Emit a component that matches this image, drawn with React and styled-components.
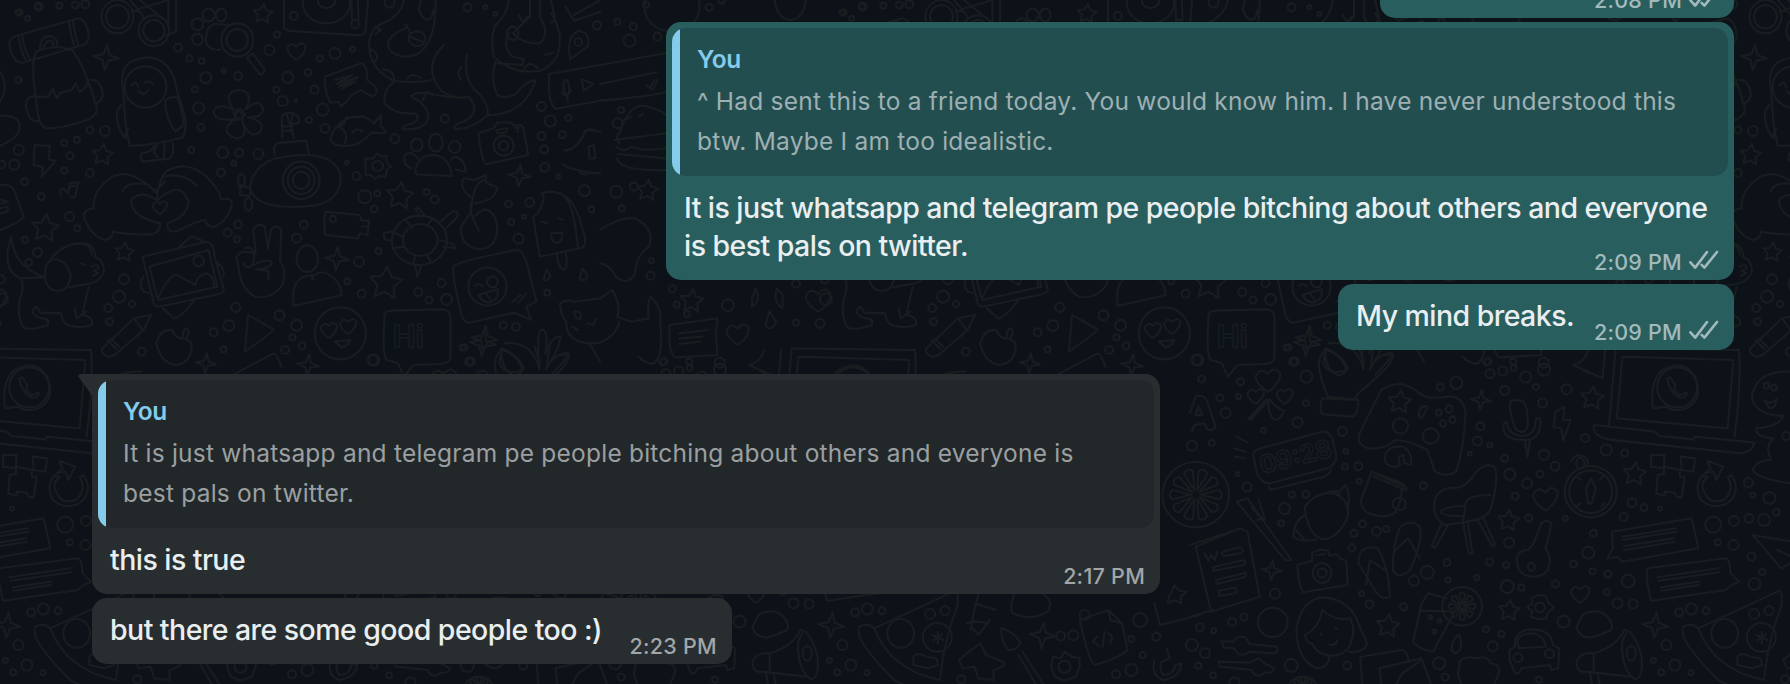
import React from "react";
import styled, { createGlobalStyle, css } from "styled-components";

const Global = createGlobalStyle`
  html, body { margin: 0; padding: 0; background: #0d1219; }
  * { box-sizing: border-box; }
`;

const Screen = styled.main`
  position: relative;
  width: 1790px;
  height: 684px;
  overflow: hidden;
  background: #0d1219;
  font-family: Inter, "Liberation Sans", sans-serif;
`;

const Wallpaper = styled.svg`
  position: absolute;
  inset: 0;
  width: 100%;
  height: 100%;
  fill: none;
  stroke: #181d20;
  stroke-width: 2.1;
  stroke-linecap: round;
  stroke-linejoin: round;
  text {
    font-family: Inter, sans-serif;
    font-weight: 700;
    stroke-width: 1.4;
  }
`;

const Thread = styled.div`
  position: relative;
  display: flex;
  flex-direction: column;
  justify-content: flex-end;
  gap: 24px;
  height: 100%;
  padding: 0 56px 20px 92px;
`;

const Group = styled.section`
  display: flex;
  flex-direction: column;
  align-items: ${(p) => (p.$out ? "flex-end" : "flex-start")};
  gap: 4px;
`;

const Bubble = styled.article`
  position: relative;
  display: flex;
  flex-direction: column;
  flex: none;
  width: ${(p) => p.$width}px;
  min-height: 66px;
  border-radius: ${(p) => (p.$tail ? "0 15px 15px 15px" : "15px")};
  color: #e9eef0;
  background: ${(p) => (p.$out ? "#295e5f" : "#282e30")};
  ${(p) =>
    p.$tail &&
    css`
      &::before {
        content: "";
        position: absolute;
        top: 0;
        left: -14px;
        width: 15px;
        height: 23px;
        background: inherit;
        clip-path: polygon(0 2px, 2px 0, 100% 0, 100% 100%);
      }
    `}
`;

const Quote = styled.blockquote`
  display: flex;
  gap: 17px;
  height: 148px;
  margin: 6px 6px 0;
  overflow: hidden;
  border-radius: 14px;
  background: ${(p) => (p.$out ? "#234e4f" : "#22282a")};
  color: ${(p) => (p.$out ? "#9db0b3" : "#9b9fa1")};
  &::before {
    content: "";
    width: 8px;
    background: #84cbec;
  }
`;

const QuoteContent = styled.div`
  padding-top: 11px;
`;

const Author = styled.div`
  height: 42px;
  font-size: 24.5px;
  line-height: 40px;
  font-weight: 600;
  letter-spacing: -0.4px;
  color: #84cbec;
`;

const QuoteText = styled.div`
  font-size: 24.5px;
  line-height: 40px;
  letter-spacing: 0.22px;
  white-space: pre;
`;

const Body = styled.div`
  display: grid;
  flex: 1;
  padding: 0 15px 0 18px;
`;

const Message = styled.div`
  grid-area: 1 / 1;
  display: flex;
  flex-direction: column;
  align-items: flex-start;
  padding-top: 13px;
  font-size: 28.5px;
  line-height: 38px;
  font-weight: 500;
  letter-spacing: -0.55px;
`;

const Line = styled.span`
  white-space: pre;
`;

const Meta = styled.div`
  grid-area: 1 / 1;
  align-self: end;
  justify-self: end;
  display: flex;
  align-items: center;
  gap: 7px;
  height: 30px;
  margin-bottom: 3px;
  font-size: 21.5px;
  line-height: 30px;
  font-weight: 500;
  letter-spacing: 0.25px;
  color: ${(p) => (p.$out ? "#a3babd" : "#a2a6a8")};
`;

const Ticks = styled.svg`
  width: 30px;
  height: 20px;
  margin-top: -5px;
  fill: none;
  stroke: currentColor;
  stroke-width: 2.6;
  stroke-linecap: round;
  stroke-linejoin: round;
`;

/* Doodles are plotted on sheets whose units are 2.613 (x) and 3 (y) per pixel. */
const SX = 2.613;
const SY = 3;

const radial = (x, y, r, inner, points) => {
  let d = "";
  for (let i = 0; i < points * 2; i++) {
    const a = (Math.PI * i) / points - Math.PI / 2 + 0.1;
    const q = i % 2 ? r * inner : r;
    d += `${i ? "L" : "M"}${(x + Math.cos(a) * q * SX).toFixed(1)} ${(y + Math.sin(a) * q * SY).toFixed(1)}`;
  }
  return d + "Z";
};

const heart = (x, y, r) => {
  const a = r * SX;
  const b = r * SY;
  return `M${x} ${y - b * 0.5}Q${x + a * 0.5} ${y - b * 1.2} ${x + a} ${y - b * 0.6}Q${x + a * 1.1} ${y + b * 0.2} ${x} ${y + b}Q${x - a * 1.2} ${y + b * 0.2} ${x - a} ${y - b * 0.4}Q${x - a * 0.6} ${y - b * 1.1} ${x} ${y - b * 0.5}Z`;
};

/* Wedges of a sliced fruit, arranged round a centre. */
const citrus = (x, y, r, count) => {
  let d = "";
  const at = (a, q) => `${(x + Math.cos(a) * q * SX).toFixed(1)} ${(y + Math.sin(a) * q * SY).toFixed(1)}`;
  for (let i = 0; i < count; i++) {
    const a = (2 * Math.PI * i) / count;
    const half = (Math.PI / count) * 0.62;
    d += `M${at(a, r * 0.16)}L${at(a - half, r * 0.88)}Q${at(a, r * 1.08)} ${at(a + half, r * 0.88)}Z`;
  }
  return d;
};

const UPPER = {
  x: 0,
  y: 0,
  dots: [
    [99, 20, 3], [155, 17, 3], [223, 13, 4], [47, 37, 2.5], [72, 55, 2.5], [465, 143, 4], [495, 175, 3], [527, 183, 3], [48, 240, 3],
    [538, 233, 5.5], [585, 212, 2], [622, 228, 4], [509, 268, 3], [519, 324, 5.5], [525, 382, 3.5], [274, 393, 5], [235, 390, 3.5], [201, 419, 3],
    [168, 429, 3], [183, 467, 3.5], [49, 450, 5], [37, 494, 5], [3, 494, 4], [168, 512, 3], [235, 519, 4], [64, 545, 3.5], [108, 590, 3.5],
    [182, 650, 4.5], [202, 685, 3], [65, 719, 3], [98, 757, 4.5], [75, 787, 3.5], [324, 838, 5], [311, 890, 6], [345, 912, 3], [283, 924, 4],
    [286, 965, 3.5], [5, 898, 6], [2, 838, 4], [371, 1055, 4], [500, 450, 3], [582, 458, 5.5], [625, 458, 4], [611, 490, 2.5], [675, 462, 5],
    [577, 518, 4], [704, 150, 5], [724, 104, 3], [768, 48, 4], [752, 232, 5.5], [805, 217, 3.5], [722, 269, 3], [822, 269, 4], [739, 303, 5],
    [774, 302, 1], [843, 329, 6], [807, 360, 3], [849, 385, 4.5], [875, 160, 5.5], [921, 148, 2.5], [836, 176, 3], [906, 488, 2], [931, 528, 4],
    [953, 590, 6.5], [986, 580, 3], [978, 627, 3.5], [1032, 416, 4.5], [1115, 576, 3], [1136, 598, 4], [794, 674, 4], [775, 714, 4.5], [622, 673, 4],
    [595, 698, 4], [619, 718, 3], [938, 785, 5], [989, 753, 3], [908, 844, 3], [945, 881, 4], [616, 922, 4.5], [730, 946, 5], [775, 976, 5.5],
    [598, 977, 5.5], [558, 997, 4], [764, 1012, 3], [745, 1050, 4], [789, 1038, 3.5], [584, 1048, 3], [974, 1080, 5], [1093, 876, 4], [1121, 900, 3.5],
    [1154, 849, 4], [1167, 898, 5.5], [1162, 356, 4], [1415, 319, 4.5], [1438, 363, 5.5], [1485, 354, 3], [1415, 408, 4], [1470, 404, 3.5], [1422, 448, 4],
    [1423, 502, 4.5], [1459, 530, 2], [1527, 572, 5.5], [1329, 612, 3.5], [1384, 607, 4.5], [1336, 666, 3], [1370, 650, 2], [1355, 716, 5],
    [1430, 878, 3], [1315, 976, 3.5], [1348, 981, 4], [1209, 1043, 3], [1226, 1085, 4], [1222, 22, 4], [1268, 22, 2], [1295, 42, 2], [1018, 8, 5],
    [1545, 628, 3], [1560, 76, 4],
    [1613, 65, 3], [1655, 80, 3.5], [1645, 122, 6], [1718, 110, 4], [1623, 330, 3], [1614, 370, 5], [1656, 560, 4], [1610, 575, 6], [1625, 625, 3],
    [1702, 782, 2.5], [1700, 827, 4], [1757, 867, 3.5], [1768, 914, 3], [1795, 942, 3], [1902, 916, 6], [2080, 851, 4], [2080, 968, 3], [2143, 970, 4.5],
    [1732, 1085, 3.5], [1801, 1085, 3], [1880, 1088, 5], [1688, 14, 3], [1853, 22, 3.5], [1885, 2, 3], [2204, 38, 3], [2254, 20, 4], [2350, 15, 3.5],
  ],
  stars: [[687, 42, 10], [268, 465, 11], [118, 685, 14], [325, 757, 10], [1045, 588, 14], [1008, 850, 17], [1692, 572, 11], [1808, 903, 12]],
  sparkles: [[277, 172, 13], [1357, 527, 11], [880, 776, 12], [1266, 1016, 13], [538, 1090, 10], [805, 1095, 11]],
  hearts: [[775, 153, 9], [418, 622, 7], [860, 990, 8], [910, 978, 8], [2138, 900, 12], [1928, 1002, 11]],
  rings: [
    [380, 261, 55, 62], [307, 50, 42, 50], [307, 50, 30, 35], [402, 92, 40, 46], [402, 92, 28, 32], [620, 120, 42, 50], [620, 120, 28, 33],
    [545, 45, 16, 19], [578, 45, 14, 19], [516, 73, 15, 18], [516, 118, 14, 17], [853, 10, 62, 60], [853, 5, 22, 19], [928, 72, 10, 13],
    [787, 541, 48, 56], [787, 541, 35, 41], [787, 541, 22, 26], [1096, 721, 72, 74], [1098, 720, 45, 48], [803, 776, 28, 40], [889, 1000, 67, 78],
    [1274, 860, 50, 57], [1287, 846, 14, 16], [1316, 437, 26, 30], [1316, 437, 12, 14], [1139, 428, 18, 27], [1089, 435, 15, 19], [1188, 441, 15, 18],
    [987, 498, 14, 15], [1511, 126, 10, 12], [519, 783, 14, 16], [1340, 100, 15, 20], [1090, 116, 22, 22], [870, 657, 8, 10], [625, 343, 12, 16],
    [2065, 0, 40, 60], [631, 542, 9, 20], [649, 613, 10, 19], [1756, 20, 72, 75],
  ],
  paths: [
    "M40 108L205 55Q228 60 232 110Q230 132 215 136L60 188Q35 190 25 140Q22 115 40 108ZM48 107Q52 150 70 185M58 104Q62 150 80 182M180 65Q185 105 195 142M190 62Q195 100 205 138M105 145Q105 108 130 108Q152 112 150 140M115 141Q120 118 135 122Q142 130 138 139",
    "M95 155Q150 130 190 152Q215 190 230 245Q245 290 253 325Q255 350 215 365Q160 385 120 385Q100 375 97 320Q85 250 87 180ZM95 290Q115 292 128 288L138 265L148 295L158 278L188 270L198 250L208 275Q225 265 230 245M230 240Q260 235 268 275Q272 300 252 310M92 288Q65 290 68 320Q75 370 100 362",
    "M322 270Q305 178 385 172Q450 175 462 270L484 350Q488 385 478 412Q410 435 340 438Q328 400 325 320ZM345 255Q355 240 362 262M378 248Q390 240 400 252M362 272Q375 292 387 270M432 300Q450 285 465 295Q478 340 480 375L458 395Q430 350 432 300M318 315Q300 330 307 365Q312 395 325 412M335 385L325 412L338 415M370 460Q400 455 402 438M370 460Q362 480 375 485L440 476Q455 475 452 430M410 435Q395 460 412 470M430 430L428 472",
    "M340 0L360 28L440 0M365 0L425 55M440 0L440 68M460 0L460 95L430 108M345 35Q370 25 375 55",
    "M600 75L560 72Q538 80 538 120Q540 150 575 150M645 172L660 160L692 208Q690 225 678 222ZM742 0L742 80Q745 92 760 93L940 106Q955 105 955 90L962 0M918 0L920 60M935 0L937 60",
    "M610 330Q580 275 625 270Q665 275 642 328Q680 290 688 330Q680 355 648 352Q695 365 680 395Q655 420 634 368Q650 415 615 415Q570 395 612 358Q560 365 558 335Q568 305 610 330M625 328L631 340L641 343L632 350L634 362L625 355L615 361L617 348L610 340L620 339Z",
    "M737 412L737 350Q745 335 765 340Q785 350 780 370L758 372L768 415M750 340L755 370M765 340L760 370M737 380L766 378M737 393L766 391M718 465Q710 430 735 428L800 422L808 465M653 562Q660 500 720 475Q870 440 890 525Q895 600 820 617Q665 635 653 562ZM628 555L655 565L652 588L627 585Z",
    "M848 230L945 190Q958 190 960 240L975 255Q990 265 980 285Q970 295 945 270Q920 280 910 298L892 320L885 305L865 308Q850 290 848 230ZM875 240L920 225L880 252L935 232L885 260L930 245L895 265",
    "M863 420Q870 375 915 352L950 350Q970 360 978 370L995 345L995 378Q1015 395 1003 400L970 398Q935 445 895 437Q870 437 863 420ZM905 350L900 370L885 380Q915 400 900 430M920 400Q930 380 948 395",
    "M1055 0Q1050 45 1000 70Q960 90 965 145Q970 210 1030 243Q1085 250 1130 240M1138 0Q1140 115 1100 155Q1060 185 1022 155Q1000 125 1040 95Q1075 80 1060 75M1160 135Q1100 200 1155 275Q1200 300 1225 290Q1260 340 1210 365Q1180 375 1190 387Q1230 390 1275 345Q1370 345 1400 240Q1370 245 1350 280Q1320 300 1300 285Q1280 240 1295 185M1220 165Q1210 230 1240 270Q1275 300 1275 340M1100 0Q1085 40 1115 60Q1132 55 1132 30M980 80L995 90L980 103M970 148Q995 165 980 185M1000 208Q1030 210 1030 238M1065 235Q1075 215 1100 235",
    "M1030 245Q1000 270 1005 310Q1030 345 1085 340Q1100 355 1080 370Q1040 380 1055 388Q1115 390 1120 350Q1115 310 1075 290Q1080 275 1120 280Q1200 300 1225 290M1060 75Q1075 90 1070 110L1105 125M1105 300L1115 275L1130 285M1205 200Q1190 220 1205 240",
    "M1330 0Q1325 45 1295 75Q1280 110 1290 170Q1340 225 1410 212Q1470 190 1462 100Q1450 60 1440 0M1385 0L1385 50L1340 100Q1370 135 1410 130Q1440 100 1410 50L1412 0M1330 100Q1310 140 1340 170L1368 178L1365 195L1300 190M1355 45L1365 65L1380 50M1440 40L1450 60L1440 68M1425 165L1445 158M1370 205Q1385 180 1405 205",
    "M1085 510Q1095 462 1135 465Q1175 470 1180 528L1088 523ZM1075 505Q1050 495 1058 465Q1075 450 1092 475M1190 508L1217 515Q1215 475 1188 470L1178 480",
    "M1250 400L1290 385L1300 368L1335 368L1345 378Q1360 368 1368 385L1380 465L1270 493Q1258 480 1250 400ZM1297 390L1325 385L1322 398L1300 400ZM1345 385L1355 382L1352 396",
    "M1490 178Q1478 110 1512 92Q1545 100 1535 140ZM1478 20L1500 62L1568 35M1500 45L1568 0M1568 195L1435 222Q1430 300 1450 327L1568 302M1475 240Q1485 235 1487 260Q1490 285 1478 285Q1468 260 1475 240M1468 275Q1480 300 1492 270M1482 290L1484 305M1520 238L1550 252L1525 272ZM1568 195L1745 158Q1760 190 1745 240L1750 270Q1740 285 1568 302M1568 252L1715 217M1690 255L1698 265L1710 240M1700 265L1706 268L1718 240",
    "M955 500L955 475L975 475L985 460L998 470L1010 468L1010 485L1022 500L1010 510L1008 530L990 528L980 537L968 525L955 525Z",
    "M90 435L130 438L128 478L145 482L110 530L112 500L88 495ZM160 585Q150 570 165 565L178 580L182 550L205 547L198 580Q200 595 185 590M182 560L203 557",
    "M410 580Q340 500 295 530Q240 570 245 625Q215 630 220 655Q240 710 275 720Q295 715 295 695Q350 705 390 703Q420 700 418 670Q340 650 343 600Q355 580 385 585L410 600Q415 530 440 510Q490 480 540 530Q580 580 577 598Q610 590 605 620Q590 670 555 682Q540 675 535 660Q510 665 470 690Q435 705 438 670Q490 650 493 605Q480 565 455 570Q425 580 410 605M320 575Q330 540 390 555M428 530Q480 515 515 558M405 575L430 545",
    "M0 555Q35 550 40 580L62 650Q55 665 0 690M0 598L20 605L0 612M0 625L20 620Q25 640 0 640M0 347Q60 345 50 390Q45 415 0 438M0 215Q25 260 0 305",
    "M30 708Q0 810 55 835L115 832M30 720Q40 800 115 832M118 815Q120 775 150 778Q180 790 185 830Q175 880 145 872Q115 865 118 815M130 780Q170 720 230 732Q250 745 248 770Q270 780 272 810Q270 835 240 850L180 862M205 732Q235 725 240 765M55 835Q65 860 50 905Q45 965 65 985Q90 990 125 975Q130 955 110 955Q85 950 85 930L95 920L105 938L160 940Q160 970 185 978Q215 985 240 975Q245 950 215 945Q225 890 232 862M195 925L200 955L225 935M210 790L222 795M240 800Q255 788 258 805L245 812L258 820L243 828",
    "M372 770L540 725Q560 730 560 765L585 870Q585 880 560 885L415 920Q400 920 400 900ZM390 800L545 750L568 860L413 900ZM415 890Q440 830 460 823L510 855Q515 825 540 820Q560 830 560 862M460 750L500 708L540 728M425 925L455 955Q470 955 505 905M375 830Q360 850 375 875L392 880M570 790Q590 810 583 830",
    "M622 790Q610 760 640 755L668 760L662 690Q670 665 692 680L700 745L708 690Q720 670 735 690L732 785Q750 810 738 855Q710 900 665 890Q625 860 622 790ZM640 745Q660 735 665 770L660 795Q645 810 635 790M665 795Q690 775 710 785Q712 805 670 808L700 812L702 838",
    "M850 635L940 645L945 662L965 662L960 705L940 700L935 715L850 705Q845 670 850 635ZM945 680L960 680",
    "M815 835Q820 815 850 818Q890 840 893 885L768 918Q755 830 815 825L818 838Z",
    "M1098 650L1085 625L1095 625L1110 648M1150 665L1185 632Q1205 640 1190 658L1160 690M1025 720Q1000 725 1003 700Q1025 690 1032 700M1085 795L1090 830L1100 800M1160 740L1190 745Q1185 725 1165 728M1060 660L1078 685M1130 655L1115 680M1030 700L1055 710M1025 745L1055 740M1080 790L1085 765M1125 785L1115 762M1165 725L1145 720",
    "M1230 640L1235 595Q1200 570 1210 535L1240 540L1270 525L1270 550L1298 560Q1300 600 1240 610M1235 595Q1240 550 1265 540M1230 610Q1225 640 1252 692M1228 640L1205 680Q1200 740 1255 748Q1305 740 1298 670Q1290 630 1265 628Q1245 640 1240 650",
    "M1405 640Q1430 590 1415 580Q1440 570 1460 580Q1500 590 1520 680Q1540 740 1515 745L1410 770Q1400 700 1393 650ZM1465 580Q1500 600 1510 745M1415 665L1430 670M1460 655L1470 660M1440 700L1470 698Q1470 725 1455 730Q1440 725 1440 700M1455 765Q1460 810 1475 808Q1485 800 1478 760",
    "M1185 800Q1190 785 1350 750Q1370 745 1385 830L1402 905L1375 920L1388 960L1345 938L1225 968Q1210 965 1205 940Q1180 820 1185 800M1240 858Q1250 845 1262 860M1250 885L1300 868Q1305 900 1278 908Q1260 905 1250 885M1270 880L1285 905M1340 905L1360 885M1355 907L1375 880",
    "M1475 452Q1510 450 1530 390L1568 395M1470 493Q1500 515 1568 520M1538 440L1540 475L1555 475L1552 435ZM1515 515Q1520 530 1540 520M1530 395Q1540 380 1560 395",
    "M1420 840L1428 808L1438 825Q1435 845 1420 840M1515 835L1522 805L1535 825Q1530 850 1515 835",
    "M268 1045L350 955L395 945L375 990L300 1065Q275 1080 265 1050ZM350 955L372 990M280 1020L305 1048M288 1015L312 1040",
    "M450 990Q420 985 408 1030Q420 1090 460 1095Q505 1085 500 1030L485 1015Q460 1020 450 990M478 1010Q475 990 490 985Q498 1000 485 1015",
    "M648 945L715 988Q715 995 640 1055ZM875 1025L915 1020Q905 1045 890 1040ZM600 1130L715 1060Q725 1065 735 1100",
    "M1005 945Q1005 935 1020 932L1155 928Q1175 930 1177 950L1177 1075Q1175 1090 1150 1092L1080 1095L1055 1130L1040 1090L1010 1080Q998 1060 1005 945Z",
    "M1465 910Q1480 895 1500 905L1568 895M1463 910Q1465 950 1480 965Q1478 1025 1540 1030L1568 1028M1500 935Q1520 930 1518 955Q1505 965 1500 935M1535 970L1550 975L1558 955M1495 980L1510 990M1540 1030L1568 1085M1568 895L1600 870Q1625 920 1612 950L1650 965L1695 955Q1690 905 1700 890Q1730 920 1725 970Q1735 1060 1710 1090Q1690 1095 1670 1070M1565 1028Q1610 1010 1618 965",
    "M1318 1030Q1390 1020 1410 1110Q1400 1000 1415 988Q1435 990 1425 1060Q1440 1010 1465 1010Q1460 1050 1435 1090Q1470 1050 1485 1060Q1480 1080 1440 1125M1310 1045Q1350 1060 1365 1110Q1320 1130 1305 1090Z",
    "M1618 430Q1605 415 1620 395Q1645 310 1685 318Q1720 325 1740 345M1605 420L1740 400M1610 440Q1630 460 1650 440Q1680 455 1740 445M1615 462L1740 475M1612 475Q1620 515 1740 510M1630 360L1650 350M1670 350L1680 340",
    "M1568 690Q1620 650 1660 655Q1715 690 1695 740Q1660 770 1660 820Q1640 860 1610 830Q1590 790 1568 790",
    "M1750 975L1875 955L1870 1000L1875 1065L1765 1072Q1745 1060 1750 975ZM1775 1000L1850 990M1775 1015L1835 1010M1775 1032L1830 1025",
    "M1965 895L1975 865Q1990 905 1965 920ZM2045 885L2030 865Q2020 910 2045 925ZM2010 935L2000 975Q2015 1000 2028 965Z",
  ],
};

const LOWER = {
  x: 366,
  y: 340,
  dots: [
    [20, 60, 5.5], [30, 117, 3.5], [132, 125, 3.5], [78, 174, 3.5], [127, 170, 2.5], [93, 219, 5], [281, 247, 5], [192, 271, 2.5], [5, 317, 5], [57, 309, 3],
    [124, 402, 2], [149, 441, 4.5], [304, 110, 6], [303, 190, 3], [274, 65, 4], [257, 22, 3], [398, 274, 4.5], [407, 334, 2.5], [405, 380, 3], [440, 379, 4],
    [442, 424, 2.5], [247, 506, 5.5], [266, 464, 3], [303, 463, 3.5], [238, 550, 3], [423, 623, 3.5], [451, 552, 3.5], [428, 580, 3.5], [487, 574, 4.5],
    [513, 567, 3], [610, 437, 3.5], [654, 142, 3.5], [696, 129, 6], [778, 65, 3.5], [784, 101, 4.5], [817, 93, 4.5], [846, 84, 3], [877, 111, 5.5],
    [925, 89, 6], [904, 141, 3], [822, 151, 4.5], [921, 189, 4.5], [984, 148, 5], [759, 259, 4], [751, 303, 4.5], [783, 315, 2.5], [731, 341, 2],
    [822, 355, 3.5], [925, 345, 5], [836, 403, 5.5], [915, 402, 3.5], [954, 379, 4.5], [881, 430, 5], [850, 469, 3.5], [885, 534, 3.5], [981, 535, 2.5],
    [1032, 294, 4], [1088, 330, 5.5], [1136, 339, 3.5], [1155, 488, 4.5], [1186, 503, 3.5], [1228, 506, 2], [1133, 531, 4], [1054, 580, 3.5], [1041, 638, 6],
    [1002, 672, 3.5], [1052, 694, 3], [1092, 702, 3.5], [1145, 723, 6.5], [834, 608, 5], [671, 668, 3.5], [783, 666, 3.5], [826, 675, 3], [620, 697, 6.5],
    [585, 722, 5], [674, 721, 2.5], [749, 713, 2.5], [829, 740, 6.5], [866, 743, 3], [955, 732, 3.5], [976, 845, 6], [1090, 756, 3], [1117, 790, 5],
    [1158, 792, 4.5], [469, 793, 4], [448, 761, 2.5], [558, 800, 3.5], [222, 761, 5], [110, 846, 4], [141, 831, 3.5], [26, 862, 4], [62, 872, 2.5],
    [5, 915, 6], [39, 939, 5], [22, 977, 3], [265, 976, 6.5], [411, 977, 4], [60, 1006, 3], [116, 1027, 5], [773, 868, 3], [814, 882, 3], [791, 919, 5],
    [651, 970, 6], [667, 1011, 3.5], [912, 1019, 3], [1245, 915, 5], [1211, 961, 2.5], [1267, 975, 5.5], [1231, 997, 3], [1309, 998, 2.5], [1278, 817, 4],
    [1310, 807, 5.5], [1348, 812, 3.5], [1474, 822, 5], [1513, 812, 4.5], [1367, 554, 8], [1421, 543, 5], [1461, 535, 4.5], [1500, 540, 6], [1532, 517, 3.5],
    [1379, 607, 3], [1420, 615, 5], [1467, 650, 4], [1495, 696, 3], [1475, 732, 6], [1459, 428, 4.5], [1514, 474, 6], [1470, 465, 2.5], [1558, 288, 4],
    [1815, 888, 4.5], [1848, 886, 5], [1878, 825, 5], [2023, 840, 7], [2000, 897, 3], [2065, 890, 4], [2030, 945, 3], [2000, 990, 6], [1960, 1003, 4], [1555, 1018, 4],
  ],
  stars: [[548, 186, 12], [1051, 175, 12], [1162, 402, 12], [832, 542, 11], [517, 858, 12], [834, 812, 11]],
  sparkles: [[760, 180, 10], [214, 691, 10], [1216, 856, 13], [1768, 886, 13], [305, 10, 13]],
  hearts: [[929, 476, 12], [1020, 762, 9], [204, 120, 12], [172, 168, 8], [248, 168, 8]],
  citrus: [[15, 464, 27, 10], [711, 799, 14, 8], [295, 1045, 12, 8]],
  rings: [
    [550, 258, 20, 23], [629, 288, 21, 23], [677, 207, 9, 11], [686, 239, 8, 10], [661, 250, 8, 10], [650, 218, 7, 9], [1047, 455, 68, 77], [1047, 455, 56, 64],
    [1020, 370, 11, 16], [15, 464, 87, 98], [345, 699, 24, 30], [345, 699, 12, 14], [216, 847, 39, 44], [892, 680, 9, 12],
    [711, 799, 52, 58], [914, 802, 13, 14], [1397, 880, 35, 43], [1493, 892, 38, 43], [857, 953, 12, 13], [939, 941, 12, 13],
    [547, 492, 17, 19], [1273, 142, 52, 60], [1506, 137, 7, 9], [1526, 143, 7, 9], [1153, 940, 12, 22], [1825, 980, 16, 18], [295, 1045, 38, 35], [628, 832, 5, 6], [652, 842, 5, 6], [638, 875, 5, 6],
  ],
  paths: [
    "M0 218L15 170Q35 160 45 185L67 260Q60 275 45 268L38 250L12 255L5 275M14 225L22 200L32 225ZM152 238L200 178M158 240L205 182M206 180Q200 220 222 240Q240 235 245 212Q220 200 208 178M115 325L145 335M118 350L143 355M122 290L150 308",
    "M355 30Q335 45 337 80Q340 115 360 170L430 178L440 160L490 110Q530 70 530 45Q500 40 485 60L470 90L480 20M355 30Q400 45 412 85Q400 110 385 105Q350 85 355 30M345 175Q335 220 350 223L425 230Q440 225 440 180ZM455 70L440 20",
    "M460 240L500 150Q550 110 600 160Q620 180 670 170Q715 165 720 220Q715 330 695 395Q670 415 640 395L620 330Q570 300 535 300Q510 330 465 325Q430 310 445 275ZM605 235Q590 230 605 200Q620 195 620 205ZM510 345Q520 315 555 320Q580 330 578 375L560 370L558 345L545 350L548 375Q525 390 510 365Z",
    "M165 345Q165 330 185 325L345 275Q370 275 375 310L383 350Q380 375 360 385L210 430Q185 430 175 400ZM205 438L210 450L350 410Q370 400 368 388",
    "M122 485L150 475L265 660L250 662ZM160 500L190 540M180 480L195 535L175 540",
    "M300 500Q330 455 375 460Q420 480 412 530Q390 595 345 598Q305 580 300 500M355 460Q365 450 390 455L405 435Q420 460 412 510M300 525Q270 545 270 590Q280 605 330 600M385 455L395 475M275 568L300 600",
    "M475 395L545 425Q570 440 565 450L552 445Q555 480 535 520Q500 540 460 515Q440 490 450 470ZM482 400L560 440M478 408L555 447",
    "M640 480Q650 440 700 443Q720 440 745 400Q770 365 795 380Q810 410 785 510L770 530Q740 545 665 555Q630 530 640 480M720 490Q725 465 785 465M715 535L720 490M655 515Q665 500 715 498M655 515Q660 530 715 528M655 555L632 618L640 625L672 560M712 540L728 640L738 640L725 540M750 535L790 620L798 615L765 530",
    "M530 690Q530 610 550 560Q580 535 600 560Q610 600 575 690Q550 715 535 700ZM532 635L570 595L600 655M440 670Q440 610 490 625Q520 680 522 770Q500 785 480 745ZM460 735L470 660L515 695",
    "M860 180Q885 180 882 260Q870 290 850 265Q830 200 838 182ZM820 250Q810 300 875 300Q920 300 915 235L903 235Q905 285 870 288Q830 285 828 245ZM875 303L882 352L888 303M955 215L978 200L975 240L995 240L975 302L970 265L950 262Z",
    "M1000 75Q1030 70 1040 30M1085 30L1078 115L1000 75M1030 90L1040 100M1095 255L1112 25L1435 30Q1440 150 1423 290M1115 235L1130 50L1420 60L1405 265ZM1055 255Q1050 285 1090 298L1440 340Q1470 335 1475 308L1320 290L1315 298L1225 288L1215 275ZM1210 205Q1200 130 1230 95Q1285 50 1320 110Q1345 185 1290 208Q1260 215 1245 200ZM1248 120Q1240 115 1255 112L1268 135L1265 150L1280 165L1298 158Q1300 175 1280 173Q1255 160 1248 120",
    "M1568 95Q1480 90 1468 170Q1475 225 1550 228Q1540 260 1480 265Q1475 290 1525 295Q1500 320 1518 360Q1480 360 1470 390Q1480 415 1568 430M1500 180Q1515 195 1533 178Q1530 205 1515 205Z",
    "M995 365Q1005 340 1025 348Q1045 355 1038 380M1040 490L1035 445L1048 415L1060 445L1050 490ZM1010 500L1020 490M1075 500L1082 490M1012 410L1022 420M1080 405L1072 418",
    "M1205 345L1240 345L1238 385L1205 380ZM1282 350L1320 355L1315 395L1285 390ZM1240 380L1280 390L1280 410L1292 412L1285 472L1270 470L1268 458L1240 455L1240 468L1218 460L1222 405L1238 402Z",
    "M1340 405Q1315 440 1335 480Q1370 515 1410 485Q1440 450 1415 405L1405 412Q1425 450 1395 480Q1360 495 1345 460Q1330 430 1352 412ZM1352 362L1393 380L1375 420L1368 395L1345 400L1360 385Z",
    "M1103 575L1310 535Q1325 600 1328 625L1130 665L1115 650L1090 655L1105 625ZM1130 590L1270 565M1130 600L1272 575M1135 618L1265 595M1135 630L1268 605M1195 685L1400 655Q1412 660 1412 700L1435 725L1415 735L1400 750L1205 782Q1190 720 1195 685ZM1222 712L1380 685M1224 722L1383 697M1230 742L1330 725M1232 752L1330 735",
    "M1470 585L1600 610M1470 585L1545 685L1568 670M1535 630L1568 648",
    "M855 650Q860 630 885 630L900 605L918 550Q930 535 945 550L935 600L928 625Q948 650 935 690Q915 720 875 705Q850 690 855 650Z",
    "M15 620L130 565L150 575L182 770L55 815ZM0 615L120 570M0 830L60 810M15 620L55 815M38 640L48 662L55 645L65 660L72 635",
    "M85 635L130 622Q145 630 132 640L88 648Q78 642 85 635M60 682L140 660Q150 668 140 675L62 692ZM68 720L145 698Q150 705 140 712L70 732ZM75 752L115 743Q128 750 118 760L78 768Z",
    "M280 675L320 662L318 640Q335 625 360 632L365 648Q385 635 390 655L408 662L412 735L295 757Q285 740 280 675ZM330 645L352 642",
    "M365 950Q360 985 330 985Q280 960 278 870Q290 775 350 772Q420 780 440 850Q450 880 463 910Q455 940 415 935M345 810Q340 860 300 885Q305 910 320 912Q330 940 365 948Q410 945 420 910Q430 880 425 855L420 835Q380 845 345 810M365 915Q385 915 385 900M342 880L344 884M380 863L384 867",
    "M605 790L622 760L670 775M605 790L583 905Q600 930 635 935L690 820M600 812L690 815M685 915Q690 890 705 885Q715 930 695 940Q680 935 685 915",
    "M880 800L895 790L892 775L910 765L930 768L935 785L950 802L935 818L930 835L912 838L890 830L895 815Z",
    "M450 1032L445 950L555 930Q570 935 570 960M495 985L605 955L630 1032M495 985L500 1032M540 1030L555 1000L605 960M705 965Q720 945 750 955Q780 945 785 970Q815 975 805 1005L795 1032M705 965L700 1005L710 1032",
    "M835 930L850 920Q845 870 895 868Q945 870 948 915L965 925L962 985L945 990L940 975L865 985L860 1000L850 1000L835 960ZM855 905Q860 880 895 880Q925 885 930 920L860 925Z",
    "M1010 860L1025 825Q1055 805 1080 820Q1110 845 1100 870Q1075 885 1050 892Q1015 895 1010 860ZM1055 940Q1020 935 1010 965Q1010 1000 1035 995L1150 1010M1055 940Q1115 920 1135 870Q1160 870 1180 950Q1185 1010 1165 1018Q1135 1000 1130 940Q1125 900 1140 880M1055 940L1055 1000M1045 998L1050 1032M1065 1000L1070 1032",
    "M1328 865L1535 755Q1550 740 1545 800Q1510 900 1500 1020Q1370 990 1328 865ZM1328 865Q1310 845 1288 862Q1275 900 1380 1020L1400 1032M1430 950Q1440 935 1465 950L1490 955L1495 975L1470 985L1430 975ZM1480 885L1508 900M1482 902L1506 882M1494 876L1494 910",
    "M82 905L115 905Q120 885 145 892L155 912L225 920Q235 935 220 940L155 935Q140 950 125 940L115 925L88 922ZM75 965L155 968L180 955L195 970L220 985Q220 1000 195 998Q175 1020 160 990L78 980Z",
    "M1580 870Q1590 800 1600 765M1582 860L1600 885L1630 840M1590 790L1645 810M1570 850Q1590 840 1625 850M1695 760Q1680 800 1690 820Q1740 845 1780 815Q1800 790 1770 762M1660 870Q1660 910 1680 930Q1700 930 1710 910Q1700 880 1660 865M1705 945L1750 1032M1715 935L1770 1032M1550 960L1575 935L1605 910L1620 945L1665 965Q1675 980 1640 990L1640 1020L1600 1015L1590 980L1560 985Z",
    "M1865 840L1940 810L1975 850L1990 930Q1975 950 1905 975Q1890 970 1865 840ZM1940 810L1945 840L1975 850M1910 890L1900 905L1915 918M1940 880L1950 890L1945 910M1930 875L1925 920",
    "M1790 980L1795 950L1815 955L1825 935L1845 950L1865 955L1865 980L1855 1010L1825 1022L1800 1010ZM2060 960Q2050 1010 2085 1020Q2130 1010 2130 970L2115 975Q2110 1005 2085 1005Q2070 990 2080 965L2100 955L2092 925M2060 790L2075 855L2180 825M2105 755L2113 735L2125 752L2145 755L2130 768L2130 790L2113 780L2095 790L2098 770Z",
  ],
};

function Sheet({ data }) {
  const d = [
    ...data.paths,
    ...data.stars.map(([x, y, r]) => radial(x, y, r, 0.5, 5)),
    ...data.sparkles.map(([x, y, r]) => radial(x, y, r, 0.32, 4)),
    ...data.hearts.map(([x, y, r]) => heart(x, y, r)),
    ...(data.citrus || []).map(([x, y, r, n]) => citrus(x, y, r, n)),
  ];
  return (
    <g transform={`translate(${data.x} ${data.y}) scale(${1 / SX} ${1 / SY})`}>
      {d.map((path, i) => (
        <path key={i} d={path} vectorEffect="non-scaling-stroke" />
      ))}
      {data.dots.map(([x, y, r], i) => (
        <ellipse key={i} cx={x} cy={y} rx={r * SX} ry={r * SY} vectorEffect="non-scaling-stroke" />
      ))}
      {data.rings.map(([x, y, rx, ry], i) => (
        <ellipse key={i} cx={x} cy={y} rx={rx} ry={ry} vectorEffect="non-scaling-stroke" />
      ))}
    </g>
  );
}

function Doodles() {
  return (
    <Wallpaper viewBox="0 0 1790 684" aria-hidden="true">
      <defs>
        <g id="doodle-tile">
          <Sheet data={UPPER} />
          <Sheet data={LOWER} />
          <text x="393" y="347" fontSize="30">Hi</text>
          <text x="438" y="474" fontSize="25" transform="rotate(-14 438 474)">09:28</text>
        </g>
      </defs>
      <use href="#doodle-tile" x="-824" />
      <use href="#doodle-tile" />
      <use href="#doodle-tile" x="824" />
      <use href="#doodle-tile" x="1648" />
    </Wallpaper>
  );
}

function ReadTicks() {
  return (
    <Ticks viewBox="0 0 30 20" aria-label="Delivered">
      <path d="M1.4 12.3L6.2 17.6L18 2" />
      <path d="M12.6 14.8L15.4 17.6L28 2" />
    </Ticks>
  );
}

function ChatMessage({ out, tail, width, quote, lines = [], time }) {
  return (
    <Bubble $out={out} $tail={tail} $width={width}>
      {quote && (
        <Quote $out={out}>
          <QuoteContent>
            <Author>You</Author>
            <QuoteText>{quote}</QuoteText>
          </QuoteContent>
        </Quote>
      )}
      <Body style={quote ? { minHeight: 28 + lines.length * 38 } : undefined}>
        <Message>
          {lines.map((line) => (
            <Line key={line}>{line}</Line>
          ))}
        </Message>
        <Meta $out={out}>
          <span>{time}</span>
          {out && <ReadTicks />}
        </Meta>
      </Body>
    </Bubble>
  );
}

export default function App() {
  return (
    <Screen>
      <Global />
      <Doodles />
      <Thread>
        <Group $out>
          <ChatMessage out width={354} time="2:08 PM" />
          <ChatMessage
            out
            width={1068}
            quote={"^ Had sent this to a friend today. You would know him. I have never understood this\nbtw. Maybe I am too idealistic."}
            lines={[
              "It is just whatsapp and telegram pe people bitching about others and everyone",
              "is best pals on twitter.",
            ]}
            time="2:09 PM"
          />
          <ChatMessage out width={396} lines={["My mind breaks."]} time="2:09 PM" />
        </Group>
        <Group>
          <ChatMessage
            tail
            width={1068}
            quote={"It is just whatsapp and telegram pe people bitching about others and everyone is\nbest pals on twitter."}
            lines={["this is true"]}
            time="2:17 PM"
          />
          <ChatMessage width={640} lines={["but there are some good people too :)"]} time="2:23 PM" />
        </Group>
      </Thread>
    </Screen>
  );
}
